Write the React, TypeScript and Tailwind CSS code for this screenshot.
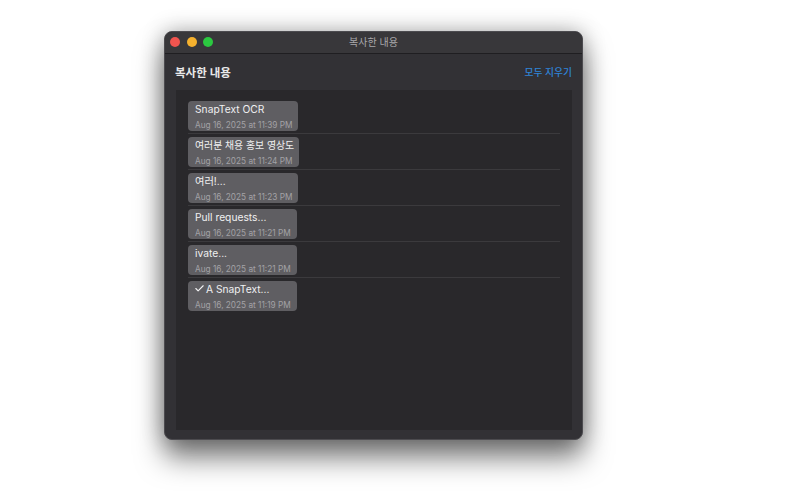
import { FC } from "react";
import { Check } from "lucide-react";

const FONT = "font-['Inter','Noto_Sans_CJK_KR',sans-serif]";

interface ClipItem {
  text: string;
  date: string;
  width: string;
  textSize?: string;
  checked?: boolean;
}

const ITEMS: ClipItem[] = [
  { text: "SnapText OCR", date: "Aug 16, 2025 at 11:39 PM", width: "w-[110px]" },
  { text: "여러분 채용 홍보 영상도", date: "Aug 16, 2025 at 11:24 PM", width: "w-[111px]", textSize: "text-[9.9px]" },
  { text: "여러!...", date: "Aug 16, 2025 at 11:23 PM", width: "w-[110px]" },
  { text: "Pull requests...", date: "Aug 16, 2025 at 11:21 PM", width: "w-[109px]" },
  { text: "ivate...", date: "Aug 16, 2025 at 11:21 PM", width: "w-[109px]" },
  { text: "A SnapText...", date: "Aug 16, 2025 at 11:19 PM", width: "w-[109px]", checked: true },
];

const ClipRow: FC<{ item: ClipItem; last: boolean }> = ({ item, last }) => (
  <li className={last ? "" : "pb-[2px] mb-[3px] border-b border-[#3b3a3d]"}>
    <div
      className={`${item.width} h-[30px] rounded-[4px] bg-[#5f5e62] pl-[7px] overflow-hidden whitespace-nowrap`}
    >
      <div
        className={`flex items-center gap-[1px] h-[15px] leading-[14px] text-[#f0f0f1] ${item.textSize ?? "text-[10.25px]"}`}
      >
        {item.checked && <Check size={11} strokeWidth={2.5} className="-ml-[1px] text-[#f0f0f1]" />}
        <span>{item.text}</span>
      </div>
      <div className="mt-[3px] text-[8.25px] leading-[12px] text-[#a3a2a6]">
        {item.date}
      </div>
    </div>
  </li>
);

export default function App() {
  return (
    <div className={`${FONT} w-[800px] h-[500px] bg-white pt-[31px] pl-[164px] overflow-hidden`}>
      <div className="w-[419px] h-[409px] flex flex-col rounded-[8px] bg-[#323135] border border-[#4c4b4f] shadow-[0_18px_28px_rgba(0,0,0,0.5),0_0_22px_rgba(0,0,0,0.3)] overflow-hidden">
        <div className="relative h-[22px] shrink-0 flex items-center justify-center bg-[#38373a] border-b border-[#1f1e21]">
          <div className="absolute left-[5px] top-[5px] flex gap-[6.5px]">
            <span className="w-[10px] h-[10px] rounded-full bg-[#f0544f]" />
            <span className="w-[10px] h-[10px] rounded-full bg-[#f5b12e]" />
            <span className="w-[10px] h-[10px] rounded-full bg-[#2bc840]" />
          </div>
          <span className="text-[10px] text-[#a9a8ab]">복사한 내용</span>
        </div>
        <div className="h-[36px] shrink-0 flex items-center justify-between px-[10px] pt-[3px]">
          <span className="text-[11.5px] font-semibold text-[#e9e9ea]">복사한 내용</span>
          <span className="text-[9.75px] font-medium text-[#2f84d8]">모두 지우기</span>
        </div>
        <div className="flex-1 ml-[11px] mr-[10px] mb-[9px] bg-[#29282b] pl-[12px] pr-[12px] pt-[11px]">
          <ul>
            {ITEMS.map((item, i) => (
              <ClipRow key={item.date + i} item={item} last={i === ITEMS.length - 1} />
            ))}
          </ul>
        </div>
      </div>
    </div>
  );
}
